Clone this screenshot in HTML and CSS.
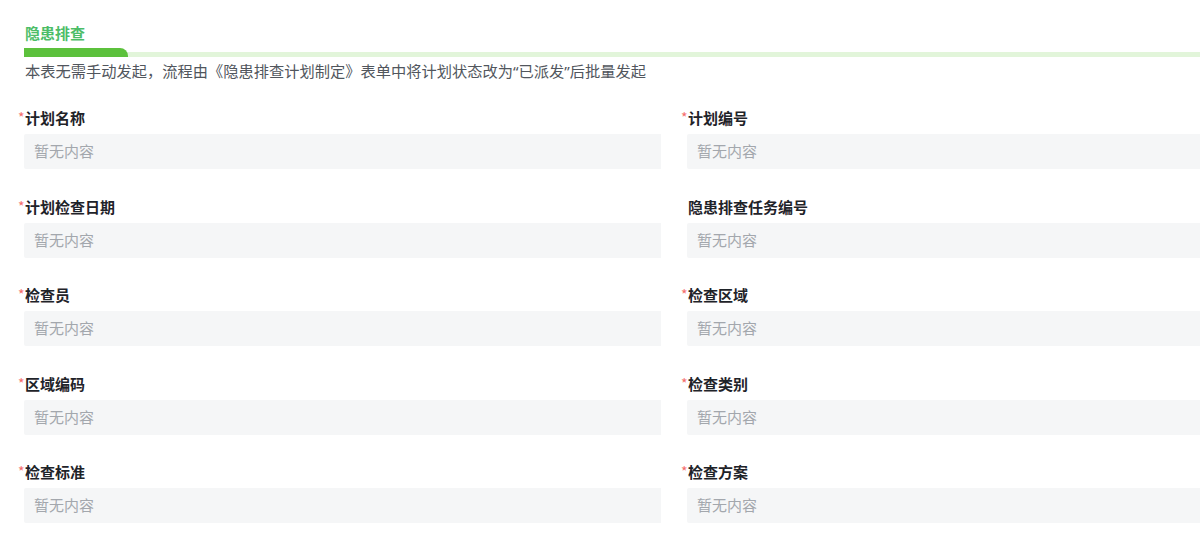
FILE: index.html
```html
<!DOCTYPE html>
<html lang="zh-CN">

<head>
    <meta charset="UTF-8">
    <meta name="viewport" content="width=device-width, initial-scale=1.0">
    <title>隐患排查</title>
    <link rel="stylesheet" href="styles.css">
</head>

<body>
    <div class="page">
        <div class="section-title">隐患排查</div>
        <div class="section-bar"><span class="bar-active"></span></div>
        <p class="section-desc">本表无需手动发起，流程由《隐患排查计划制定》表单中将计划状态改为“已派发”后批量发起</p>

        <div class="form-grid">
            <div class="field">
                <label class="field-label required">计划名称</label>
                <div class="field-value">暂无内容</div>
            </div>
            <div class="field">
                <label class="field-label required">计划编号</label>
                <div class="field-value">暂无内容</div>
            </div>

            <div class="field">
                <label class="field-label required">计划检查日期</label>
                <div class="field-value">暂无内容</div>
            </div>
            <div class="field">
                <label class="field-label">隐患排查任务编号</label>
                <div class="field-value">暂无内容</div>
            </div>

            <div class="field">
                <label class="field-label required">检查员</label>
                <div class="field-value">暂无内容</div>
            </div>
            <div class="field">
                <label class="field-label required">检查区域</label>
                <div class="field-value">暂无内容</div>
            </div>

            <div class="field">
                <label class="field-label required">区域编码</label>
                <div class="field-value">暂无内容</div>
            </div>
            <div class="field">
                <label class="field-label required">检查类别</label>
                <div class="field-value">暂无内容</div>
            </div>

            <div class="field">
                <label class="field-label required">检查标准</label>
                <div class="field-value">暂无内容</div>
            </div>
            <div class="field">
                <label class="field-label required">检查方案</label>
                <div class="field-value">暂无内容</div>
            </div>
        </div>
    </div>
</body>

</html>
```

FILE: styles.css
```css
:root {
    --green: #5cc13c;
    --green-light: #e2f5da;
    --title-green: #4cbd67;
    --label-color: #1f2329;
    --desc-color: #51565d;
    --placeholder: #a3a7ad;
    --field-bg: #f5f6f7;
}

html,
body {
    margin: 0;
    padding: 0;
    background-color: #fff;
}

body {
    font-family: "Noto Sans", "Noto Sans CJK SC", sans-serif;
    font-size: 15px;
    color: var(--label-color);
}

.page {
    padding: 22px 0 0 24px;
}

.section-title {
    padding-left: 1px;
    font-size: 15px;
    line-height: 22px;
    font-weight: 700;
    color: var(--title-green);
}

.section-bar {
    position: relative;
    margin-top: 4px;
    height: 9px;
}

.section-bar::after {
    content: "";
    position: absolute;
    left: 0;
    right: 0;
    bottom: 0;
    height: 5px;
    background-color: var(--green-light);
}

.bar-active {
    position: relative;
    z-index: 1;
    display: block;
    width: 104px;
    height: 9px;
    background-color: var(--green);
    border-radius: 0 8px 0 0;
}

.section-desc {
    margin: 3px 0 0;
    padding-left: 1px;
    font-size: 15.25px;
    line-height: 22px;
    color: var(--desc-color);
}

.form-grid {
    display: grid;
    grid-template-columns: 637px 1fr;
    column-gap: 26px;
    row-gap: 26.5px;
    margin-top: 25px;
}

.field-label {
    position: relative;
    display: block;
    padding-left: 1px;
    line-height: 22px;
    font-weight: 700;
    color: var(--label-color);
}

.field-label.required::before {
    content: "*";
    position: absolute;
    left: -6px;
    top: -1px;
    font-family: "Noto Sans CJK SC", sans-serif;
    font-size: 14px;
    font-weight: 400;
    color: #f56c6c;
}

.field-value {
    margin-top: 5px;
    height: 35px;
    line-height: 35px;
    padding-left: 10px;
    background-color: var(--field-bg);
    border-radius: 2px 0 0 2px;
    color: var(--placeholder);
}
```
